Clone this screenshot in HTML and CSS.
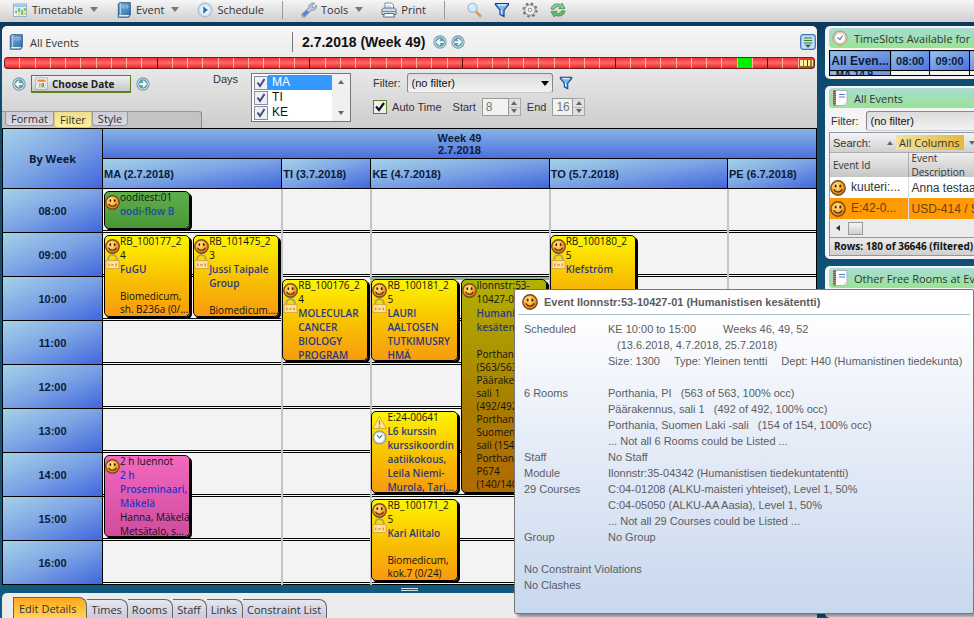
FILE: index.html
```html
<!DOCTYPE html>
<html lang="en">
<head>
    <meta charset="UTF-8">
    <meta name="viewport" content="width=device-width, initial-scale=1.0">
    <title>Timetable - Week 49</title>
    <link rel="stylesheet" href="styles.css">
</head>
<body>
    <!-- Icon sprite -->
    <svg class="sprite" aria-hidden="true">
        <defs>
            <radialGradient id="gold" cx="40%" cy="35%" r="65%">
                <stop offset="0" stop-color="#fff0a0"/><stop offset=".5" stop-color="#fcb53c"/><stop offset="1" stop-color="#d9741a"/>
            </radialGradient>
            <linearGradient id="blue" x1="0" y1="0" x2="1" y2="1">
                <stop offset="0" stop-color="#7fb2e0"/><stop offset="1" stop-color="#2f6aa5"/>
            </linearGradient>
            <radialGradient id="glass"><stop offset=".3" stop-color="#fff"/><stop offset="1" stop-color="#b8d4ea"/></radialGradient>
        </defs>
        <symbol id="i-timetable" viewBox="0 0 16 16">
            <rect x="1.5" y="2" width="13" height="12.5" fill="#f2f8fc" stroke="#8fb4cf"/>
            <path d="M2 2.5h12v2.5H2z" fill="#9cc8e6"/>
            <path d="M4.8 5v9M8 5v9M11.200 5v9M2 8h12M2 11h12" stroke="#bcd3e2" stroke-width=".8"/>
            <path d="M3 9h2v2H3zM6 6h2v4H6zM9 8h2v5H9zM12 6h2v3h-2z" fill="#7cc47a"/>
            <path d="M12 10h2v3h-2zM6 11.500h2v2H6z" fill="#f0d070"/>
        </symbol>
        <symbol id="i-book" viewBox="0 0 16 16">
            <path d="M3.500.7h10.800v12l-1.500 2.500H2.300V2z" fill="url(#blue)" stroke="#27527d" stroke-width=".9"/>
            <path d="M4.600 1.200v11.300" stroke="#b7d7f2"/>
            <path d="M3 13h10.300l-.9 1.600H3z" fill="#e6edf3"/>
            <path d="M6.500 3.500h5.500v2.500H6.500z" fill="#6ba0cf" stroke="#a9cdec" stroke-width=".6"/>
        </symbol>
        <symbol id="i-play" viewBox="0 0 16 16">
            <circle cx="8" cy="8" r="7" fill="url(#glass)" stroke="#9dbbd3"/>
            <path d="M6.200 4.300 11 8l-4.800 3.700z" fill="#2e73b8"/>
        </symbol>
        <symbol id="i-tools" viewBox="0 0 16 16">
            <path d="M13.500 1.300 10.800 3.800l.4 1.600 1.600.3 2.500-2.600c.6 2-.1 3.800-1.700 4.700-1 .5-2 .5-3 .2L5 13.700c-.8 1.500-2.800 1.800-3.800.8s-.6-2.900.9-3.600l5.800-5.200c-.5-2.700 2.300-5.400 5.600-4.400z" fill="#b9cbdc" stroke="#64809d" stroke-width=".8"/>
            <path d="M2.200 11.600 6 8.200l1.900 1.900-3.500 3.500c-1.200 1.600-3.900-.4-2.200-2z" fill="#4b84cf"/>
        </symbol>
        <symbol id="i-print" viewBox="0 0 16 16">
            <path d="M4 7V1h6.500L12.500 3v4" fill="#fff" stroke="#6288b4"/>
            <path d="M1 7.500 2.500 6h11L15 7.500v5H1z" fill="#cdd9e5" stroke="#5b6e85"/>
            <path d="M1.500 9.500h13" stroke="#7b8ea6"/>
            <path d="M3.500 11.500h9l1 3.500h-11z" fill="#fff" stroke="#5b6e85"/>
            <path d="M5.500 4h4.500M5.500 5.500H11" stroke="#7fb0e4" stroke-width=".8"/>
        </symbol>
        <symbol id="i-search" viewBox="0 0 16 16">
            <path d="m9.800 9.300 4.400 4.700" stroke="#d99a55" stroke-width="2.600" stroke-linecap="round"/>
            <circle cx="6.500" cy="5.800" r="4.500" fill="#d3e9fa" stroke="#9dbfdf" stroke-width="1.300"/>
            <path d="M4 5.500a2.600 2.600 0 0 1 2.500-2.300" stroke="#fff" fill="none"/>
        </symbol>
        <symbol id="i-funnel" viewBox="0 0 16 16">
            <path d="M1.500 1.500h13v1.300L10 8.200v6.300L6 12.500V8.200L1.500 2.800z" fill="#7db8ec" stroke="#153f8c" stroke-width="1.200"/>
            <path d="M4 3h8" stroke="#e3f3ff" stroke-width="1.300"/><path d="M7.500 8v4" stroke="#dcefff" stroke-width="1.200"/>
        </symbol>
        <symbol id="i-gear" viewBox="0 0 16 16">
            <circle cx="8" cy="8" r="6.500" fill="none" stroke="#737373" stroke-width="2" stroke-dasharray="2.500 2.600"/>
            <circle cx="8" cy="8" r="5.200" fill="#f2f2f2" stroke="#808080" stroke-width=".9"/>
            <circle cx="8" cy="8" r="1.800" fill="#fff" stroke="#808080" stroke-width=".9"/>
        </symbol>
        <symbol id="i-refresh" viewBox="0 0 16 16">
            <path d="M1 7c.5-4 5-6.500 9.500-4.300L12 1l3 5.500-6.200.3 1.500-1.700C7.500 4 5 4.800 4.300 7.300z" fill="#8bcb8d" stroke="#3f8f4b" stroke-width=".8"/>
            <path d="M15 9c-.5 4-5 6.500-9.500 4.300L4 15 1 9.500l6.200-.3-1.500 1.700c2.800 1.100 5.300.3 6-2.200z" fill="#69b574" stroke="#3f8f4b" stroke-width=".8"/>
        </symbol>
        <symbol id="i-left" viewBox="0 0 16 16">
            <circle cx="8" cy="8" r="7" fill="#d8e8f0" stroke="#7699ba" stroke-width="1.200"/><circle cx="8" cy="8" r="5.400" fill="#5b9fa8"/>
            <path d="M12 8H5.500M8 4.800 4.800 8 8 11.200" fill="none" stroke="#fff" stroke-width="2"/>
        </symbol>
        <symbol id="i-right" viewBox="0 0 16 16">
            <circle cx="8" cy="8" r="7" fill="#d8e8f0" stroke="#7699ba" stroke-width="1.200"/><circle cx="8" cy="8" r="5.400" fill="#5b9fa8"/>
            <path d="M4 8h6.500M8 4.800 11.200 8 8 11.200" fill="none" stroke="#fff" stroke-width="2"/>
        </symbol>
        <symbol id="i-calendar" viewBox="0 0 16 16">
            <rect x="1" y="1" width="14" height="14" fill="#fff" stroke="#7fa6c6"/>
            <path d="M3 3h10v3H3z" fill="#ef8a3c"/>
            <path d="M3.500 6v7h9V6" fill="none" stroke="#f0b080"/>
            <path d="M6 7.500v4.500M8.500 8h2v3.500h-2z" fill="none" stroke="#56883e" stroke-width="1.200"/>
        </symbol>
        <symbol id="i-smiley" viewBox="0 0 16 16">
            <circle cx="8" cy="8" r="7.200" fill="url(#gold)" stroke="#7a4a1c" stroke-width="1.400"/>
            <ellipse cx="5.700" cy="6" rx="1" ry="1.500" fill="#3c1c04"/><ellipse cx="10.300" cy="6" rx="1" ry="1.500" fill="#3c1c04"/>
            <path d="M3.800 9.300c1.500 3.600 6.900 3.600 8.400 0" fill="none" stroke="#5a2a08" stroke-width="1.200"/>
        </symbol>
        <symbol id="i-lock" viewBox="0 0 16 16">
            <path d="M3.500 8V5.500a4.500 4.500 0 0 1 9 0V8" fill="none" stroke="#a3a07c" stroke-width="2"/>
            <path d="M1 7h14v8.500H1z" fill="#fbe3a0" stroke="#dba436"/>
            <path d="M4 10v3M6.500 11.500h3M12 10v3" stroke="#d98e2e" stroke-width="1.400"/>
        </symbol>
        <symbol id="i-warning" viewBox="0 0 16 16">
            <path d="M8 1.500 15 14.500H1z" fill="#ffe793" stroke="#d9a52a" stroke-linejoin="round"/>
            <path d="M8 5.500v5M8 11.800v1.500" stroke="#9a8050" stroke-width="1.500"/>
        </symbol>
        <symbol id="i-clock" viewBox="0 0 16 16">
            <circle cx="8" cy="8" r="7" fill="#b5cbdd" stroke="#7c8fa3"/><circle cx="8" cy="8" r="5.200" fill="#fff"/>
            <path d="M5.500 5.500 8 8.500l3-3" fill="none" stroke="#4a6c94" stroke-width="1.200"/>
        </symbol>
        <symbol id="i-clock-gold" viewBox="0 0 16 16">
            <circle cx="8" cy="8" r="7" fill="#e5d3bc" stroke="#a8927c"/><circle cx="8" cy="8" r="5.200" fill="#fff" stroke="#c4b39e" stroke-width=".6"/>
            <path d="M5.500 7.500 8 9.500l2.500-4" fill="none" stroke="#5c7fa8" stroke-width="1.200"/>
        </symbol>
        <symbol id="i-notebook" viewBox="0 0 16 16">
            <path d="M3 .5h12v15H3z" fill="#fff" stroke="#a9b4bd"/>
            <path d="M2.500.5v15" stroke="#c53a33" stroke-width="3" stroke-dasharray="1.500 .5"/>
            <path d="M7 4.500h6M7 7h6" stroke="#4b7fd0" stroke-width="1.200"/><path d="M10.500 15.500H15V11z" fill="#cfd8e0"/>
        </symbol>
        <symbol id="i-expand" viewBox="0 0 16 16">
            <rect x=".7" y=".7" width="14.600" height="14.600" rx="2.500" fill="#c4dcf4" stroke="#3f74b4" stroke-width="1.200"/>
            <path d="M4 4h8M4 6.500h8M4 9h8" stroke="#37803c"/><path d="m5 10.800 3 3 3-3z" fill="#265f2c"/>
        </symbol>
    </svg>

    <header class="toolbar">
        <button class="tool"><svg><use href="#i-timetable"/></svg>Timetable<span class="caret"></span></button>
        <button class="tool"><svg><use href="#i-book"/></svg>Event<span class="caret"></span></button>
        <button class="tool"><svg><use href="#i-play"/></svg>Schedule</button>
        <span class="separator"></span>
        <button class="tool"><svg><use href="#i-tools"/></svg>Tools<span class="caret"></span></button>
        <button class="tool"><svg><use href="#i-print"/></svg>Print</button>
        <span class="separator"></span>
        <button class="tool tool-icon" aria-label="Search"><svg><use href="#i-search"/></svg></button>
        <button class="tool tool-icon" aria-label="Filter"><svg><use href="#i-funnel"/></svg></button>
        <button class="tool tool-icon" aria-label="Settings"><svg><use href="#i-gear"/></svg></button>
        <button class="tool tool-icon" aria-label="Refresh"><svg><use href="#i-refresh"/></svg></button>
    </header>

    <main class="workspace">
        <div class="main-column">
            <section class="timetable">
                <div class="timetable-head">
                    <div class="head-name"><svg><use href="#i-book"/></svg>All Events</div>
                    <h1>2.7.2018 (Week 49)</h1>
                    <button class="round" aria-label="Previous week"><svg><use href="#i-left"/></svg></button>
                    <button class="round" aria-label="Next week"><svg><use href="#i-right"/></svg></button>
                    <button class="expand" aria-label="Expand"><svg><use href="#i-expand"/></svg></button>
                </div>

                <!-- One cell for each week of the year -->
                <div class="weeks">
                    <i></i><i></i><i></i><i></i><i></i><i></i><i></i><i></i><i></i><i></i>
                    <i></i><i></i><i></i><i></i><i></i><i></i><i></i><i></i><i></i><i></i>
                    <i></i><i></i><i></i><i></i><i></i><i></i><i></i><i></i><i></i><i></i>
                    <i></i><i></i><i></i><i></i><i></i><i></i><i></i><i></i><i></i><i></i>
                    <i></i><i></i><i></i><i></i><i></i><i></i><i></i><i></i><i class="current"></i><i></i>
                    <i></i><i></i><i class="weeks-handle"></i>
                </div>

                <div class="controls">
                    <div class="date-side">
                        <div class="date-row">
                            <button class="round" aria-label="Previous date"><svg><use href="#i-left"/></svg></button>
                            <button class="choose-date"><svg><use href="#i-calendar"/></svg>Choose Date</button>
                            <button class="round" aria-label="Next date"><svg><use href="#i-right"/></svg></button>
                        </div>
                        <nav class="small-tabs">
                            <button>Format</button>
                            <button class="active">Filter</button>
                            <button>Style</button>
                        </nav>
                    </div>
                    <span class="days-label" id="days-label">Days</span>
                    <div class="days-list" role="group" aria-labelledby="days-label">
                        <div class="days-options">
                            <label class="selected"><input type="checkbox" checked><span>MA</span></label>
                            <label><input type="checkbox" checked><span>TI</span></label>
                            <label><input type="checkbox" checked><span>KE</span></label>
                        </div>
                        <div class="days-scroll">
                            <span class="arrow up"></span>
                            <span class="arrow down"></span>
                        </div>
                    </div>
                    <div class="filter-side">
                        <div class="filter-row">
                            <label for="filter">Filter:</label>
                            <select id="filter"><option>(no filter)</option></select>
                            <svg><use href="#i-funnel"/></svg>
                        </div>
                        <div class="time-row">
                            <label class="auto-time"><input type="checkbox" checked>Auto Time</label>
                            <label for="start">Start</label>
                            <span class="spinner">
                                <input id="start" type="text" value="8">
                                <span class="spin"><button aria-label="Later start"><span class="arrow up"></span></button><button aria-label="Earlier start"><span class="arrow down"></span></button></span>
                            </span>
                            <label for="end">End</label>
                            <span class="spinner">
                                <input id="end" type="text" value="16">
                                <span class="spin"><button aria-label="Later end"><span class="arrow up"></span></button><button aria-label="Earlier end"><span class="arrow down"></span></button></span>
                            </span>
                        </div>
                    </div>
                </div>

                <div class="calendar">
                    <div class="blue corner">By Week</div>
                    <div class="blue week">Week 49<br>2.7.2018</div>
                    <div class="blue day ma">MA (2.7.2018)</div>
                    <div class="blue day ti">TI (3.7.2018)</div>
                    <div class="blue day ke">KE (4.7.2018)</div>
                    <div class="blue day to">TO (5.7.2018)</div>
                    <div class="blue day pe">PE (6.7.2018)</div>

                    <div class="blue hour h8">08:00</div><div class="line h8"></div>
                    <div class="blue hour h9">09:00</div><div class="line h9"></div>
                    <div class="blue hour h10">10:00</div><div class="line h10"></div>
                    <div class="blue hour h11">11:00</div><div class="line h11"></div>
                    <div class="blue hour h12">12:00</div><div class="line h12"></div>
                    <div class="blue hour h13">13:00</div><div class="line h13"></div>
                    <div class="blue hour h14">14:00</div><div class="line h14"></div>
                    <div class="blue hour h15">15:00</div><div class="line h15"></div>
                    <div class="blue hour h16">16:00</div><div class="line h16"></div>

                    <div class="rule ti"></div>
                    <div class="rule ke"></div>
                    <div class="rule to"></div>
                    <div class="rule pe"></div>
                    <div class="slot-mark"></div>

                    <article class="event green slot-ma1 at-8">
                        <div class="marks"><svg><use href="#i-smiley"/></svg></div>
                        <div class="text">ooditest:01<b>oodi-flow B</b></div>
                    </article>
                    <article class="event yellow slot-ma1 at-9">
                        <div class="marks"><svg><use href="#i-smiley"/></svg><svg><use href="#i-lock"/></svg></div>
                        <div class="text">RB_100177_2<br>4<b>FuGU</b><p>Biomedicum,<br>sh. B236a (0/...</p></div>
                    </article>
                    <article class="event yellow slot-ma2 at-9">
                        <div class="marks"><svg><use href="#i-smiley"/></svg><svg><use href="#i-lock"/></svg></div>
                        <div class="text">RB_101475_2<br>3<b>Jussi Taipale<br>Group</b><p>Biomedicum....</p></div>
                    </article>
                    <article class="event pink slot-ma1 at-14">
                        <div class="marks"><svg><use href="#i-smiley"/></svg></div>
                        <div class="text">2 h luennot<b>2 h<br>Proseminaari,<br>Mäkelä</b>Hanna, Mäkelä<br>Metsätalo, s...</div>
                    </article>
                    <article class="event yellow slot-ti at-10">
                        <div class="marks"><svg><use href="#i-smiley"/></svg><svg><use href="#i-lock"/></svg></div>
                        <div class="text">RB_100176_2<br>4<b>MOLECULAR<br>CANCER<br>BIOLOGY<br>PROGRAM</b></div>
                    </article>
                    <article class="event yellow slot-ke1 at-10">
                        <div class="marks"><svg><use href="#i-smiley"/></svg><svg><use href="#i-lock"/></svg></div>
                        <div class="text">RB_100181_2<br>5<b>LAURI<br>AALTOSEN<br>TUTKIMUSRY<br>HMÄ</b></div>
                    </article>
                    <article class="event olive slot-ke2 at-10-long">
                        <div class="marks"><svg><use href="#i-smiley"/></svg></div>
                        <div class="text">Ilonnstr:53-<br>10427-01<b>Humanistis<br>kesätentti</b><p>Porthania<br>(563/563)<br>Päärakennu<br>sali 1<br>(492/492)<br>Porthania<br>Suomen L<br>sali (154/<br>Porthania<br>P674<br>(140/140)</p></div>
                    </article>
                    <article class="event yellow slot-ke1 at-13">
                        <div class="marks"><svg><use href="#i-warning"/></svg><svg><use href="#i-clock"/></svg></div>
                        <div class="text">E:24-00641<b>L6 kurssin<br>kurssikoordin<br>aatiikokous,<br>Leila Niemi-<br>Murola, Tarj...</b></div>
                    </article>
                    <article class="event yellow slot-ke1 at-15">
                        <div class="marks"><svg><use href="#i-smiley"/></svg><svg><use href="#i-lock"/></svg></div>
                        <div class="text">RB_100171_2<br>5<b>Kari Alitalo</b><p>Biomedicum,<br>kok.7 (0/24)</p></div>
                    </article>
                    <article class="event yellow slot-to1 at-9">
                        <div class="marks"><svg><use href="#i-smiley"/></svg><svg><use href="#i-lock"/></svg></div>
                        <div class="text">RB_100180_2<br>5<b>Klefström</b></div>
                    </article>
                </div>
            </section>

            <div class="splitter"><span></span></div>

            <section class="details">
                <nav class="tabs">
                    <button class="active">Edit Details</button>
                    <button>Times</button>
                    <button>Rooms</button>
                    <button>Staff</button>
                    <button>Links</button>
                    <button>Constraint List</button>
                </nav>
            </section>
        </div>

        <aside class="side-column">
            <section class="panel">
                <h2><svg><use href="#i-clock-gold"/></svg>TimeSlots Available for Event</h2>
                <div class="slots-wrap">
                    <table class="slots">
                        <tr><th class="first">All Even...</th><th>08:00</th><th>09:00</th><th>10:00</th></tr>
                        <tr><th class="first">MA 14.9....</th><td></td><td></td><td></td></tr>
                    </table>
                </div>
            </section>

            <section class="panel">
                <h2><svg><use href="#i-notebook"/></svg>All Events</h2>
                <div class="side-filter">
                    <label for="side-filter">Filter:</label>
                    <select id="side-filter"><option>(no filter)</option></select>
                </div>
                <div class="list">
                    <div class="search-row">
                        <span>Search:</span>
                        <span class="arrow up"></span>
                        <button class="all-columns">All Columns</button>
                        <span class="arrow down"></span>
                    </div>
                    <table class="events-table">
                        <thead>
                            <tr><th>Event Id</th><th><div class="two-line">Event<br>Description</div></th></tr>
                        </thead>
                        <tbody>
                            <tr><td><svg><use href="#i-smiley"/></svg>kuuteri:...</td><td>Anna testaa</td></tr>
                            <tr class="chosen"><td><svg><use href="#i-smiley"/></svg>E:42-0...</td><td>USD-414 / S</td></tr>
                        </tbody>
                    </table>
                    <div class="h-scroll"><span class="arrow left"></span><span class="thumb"></span></div>
                    <div class="rows-count">Rows: 180 of 36646 (filtered)</div>
                </div>
            </section>

            <section class="panel panel-rest">
                <h2><svg><use href="#i-notebook"/></svg>Other Free Rooms at Event</h2>
            </section>
        </aside>
    </main>

    <div class="tooltip" role="tooltip">
        <div class="tooltip-title"><svg><use href="#i-smiley"/></svg>Event Ilonnstr:53-10427-01 (Humanistisen kesätentti)</div>
        <dl>
            <dt>Scheduled</dt>
            <dd>
                <span class="wide">KE 10:00 to 15:00</span><span>Weeks 46, 49, 52</span><br>
                <span class="indent">(13.6.2018, 4.7.2018, 25.7.2018)</span><br>
                <span class="part">Size: 1300</span><span class="part">Type: Yleinen tentti</span><span>Dept: H40 (Humanistinen tiedekunta)</span>
            </dd>
            <dt class="spaced">6 Rooms</dt>
            <dd class="spaced">
                Porthania, PI &nbsp; (563 of 563, 100% occ)<br>
                Päärakennus, sali 1 &nbsp; (492 of 492, 100% occ)<br>
                Porthania, Suomen Laki -sali &nbsp; (154 of 154, 100% occ)<br>
                ... Not all 6 Rooms could be Listed ...
            </dd>
            <dt>Staff</dt>
            <dd>No Staff</dd>
            <dt>Module</dt>
            <dd>Ilonnstr:35-04342 (Humanistisen tiedekuntatentti)</dd>
            <dt>29 Courses</dt>
            <dd>
                C:04-01208 (ALKU-maisteri yhteiset), Level 1, 50%<br>
                C:04-05050 (ALKU-AA Aasia), Level 1, 50%<br>
                ... Not all 29 Courses could be Listed ...
            </dd>
            <dt>Group</dt>
            <dd>No Group</dd>
        </dl>
        <p>No Constraint Violations<br>No Clashes</p>
    </div>
</body>
</html>
```
FILE: styles.css
```css
* {
    margin: 0;
    padding: 0;
    box-sizing: border-box;
}

body {
    font-family: "Open Sans", "Noto Sans", sans-serif;
    font-size: 11px;
    color: #333;
    height: 100vh;
    display: flex;
    flex-direction: column;
    overflow: hidden;
    position: relative;
    background: linear-gradient(#0a2f52, #0f4b70 10%, #105a80);
}

button, input, select {
    font: inherit;
    color: inherit;
}

button {
    background: none;
    border: none;
    white-space: nowrap;
}

svg {
    width: 16px;
    height: 16px;
    flex: none;
    display: block;
}

.sprite {
    position: absolute;
    width: 0;
    height: 0;
}

/* Small triangles */
.caret, .arrow {
    width: 0;
    height: 0;
    border: 4px solid transparent;
    flex: none;
}

.caret {
    border-top: 5px solid #777;
    border-bottom: none;
    margin-left: 3px;
}

.arrow {
    display: block;
    border-width: 3px;
}

.arrow.up {
    border-top: none;
    border-bottom: 4px solid #666;
}

.arrow.down {
    border-bottom: none;
    border-top: 4px solid #666;
}

.arrow.left {
    border-left: none;
    border-right: 4px solid #333;
}

/* Toolbar */
.toolbar {
    flex: none;
    height: 22px;
    padding: 0 3px 3px;
    display: flex;
    align-items: center;
    background: linear-gradient(#f5f5f5, #cfcfcf);
}

.tool {
    display: flex;
    align-items: center;
    gap: 4px;
    padding: 0 9px;
}

.tool-icon {
    padding: 0 6px;
}

.separator {
    width: 1px;
    height: 18px;
    margin: 0 9px;
    background: #999;
}

.separator + .tool-icon {
    margin-left: 6px;
}

/* Workspace */
.workspace {
    flex: 1;
    min-height: 0;
    display: flex;
    gap: 8px;
    padding: 4px 0 0 2px;
}

.main-column {
    flex: 1;
    min-width: 0;
    display: flex;
    flex-direction: column;
}

.timetable {
    border-radius: 5px 5px 0 0;
    border-top: 1px solid #fff;
    background: linear-gradient(#f6f6f6, #e4e4e4 50px, #cdcdcd 102px);
}

.timetable-head {
    height: 30px;
    padding: 0 1px 0 6px;
    display: flex;
    align-items: center;
    gap: 4px;
}

.head-name {
    flex: 0 0 285px;
    height: 20px;
    display: flex;
    align-items: center;
    gap: 6px;
    border-right: 1px solid #777;
}

h1 {
    font: bold 14px "Liberation Sans", Arial, sans-serif;
    color: #111;
    margin: 0 3px 0 5px;
}

.round svg {
    width: 14px;
    height: 14px;
}

.expand {
    margin-left: auto;
}

.weeks {
    height: 12px;
    margin: 0 2px;
    display: grid;
    grid-template-columns: repeat(53, 1fr);
    border: 1px solid #702020;
    border-radius: 3px;
    background: linear-gradient(#f03030, #ff6a6a 50%, #f02020);
}

.weeks i {
    border-right: 1px solid #ffb0b0;
}

.weeks i:nth-child(10n) {
    border-color: #501010;
}

.weeks .current {
    background: #00f000;
}

.weeks .weeks-handle {
    margin: 1px 0;
    border: 1px solid #8a6a20;
    background: linear-gradient(90deg, #fff0a0 20%, #a08020 20% 30%, #fff0a0 30% 50%, #802010 50% 65%, #fff0a0 65% 80%, #a08020 80% 90%, #fff0a0 90%);
}

/* Controls */
.controls {
    height: 59px;
    display: flex;
}

.date-side {
    flex: 0 0 200px;
    display: flex;
    flex-direction: column;
    justify-content: space-between;
}

.date-row {
    display: flex;
    align-items: center;
    gap: 5px;
    padding: 6px 0 0 10px;
}

.choose-date {
    width: 100px;
    height: 18px;
    display: flex;
    align-items: center;
    gap: 4px;
    padding: 0 3px;
    border: 1px solid #5f7f1f;
    border-bottom-width: 2px;
    background: linear-gradient(#f0f0f0, #c8c8c8);
    font-size: 10px;
    font-weight: 700;
    color: #222;
}

.choose-date svg {
    width: 13px;
    height: 13px;
}

.small-tabs {
    display: flex;
    height: 17px;
    padding-left: 3px;
    border-top: 1px solid #999;
    border-right: 1px solid #888;
    border-top-right-radius: 3px;
    background: #c3c3c3;
}

.small-tabs button {
    height: 14px;
    line-height: 13px;
    padding: 0 5px;
    border: 1px solid #999;
    border-top: none;
    border-radius: 0 0 4px 4px;
    background: linear-gradient(#cdcdda, #dadae8);
}

.small-tabs .active {
    height: 16px;
    line-height: 15px;
    border-color: #d8c870;
    background: linear-gradient(#f0df8a, #fff0a0);
}

.days-label {
    font: 11px "Liberation Sans", Arial, sans-serif;
    margin: 4px 13px 0 11px;
}

.days-list {
    width: 100px;
    height: 49px;
    margin-top: 4px;
    display: flex;
    border: 1px solid #777;
    background: #fff;
    font: 12px/15px "Liberation Sans", Arial, sans-serif;
    color: #111;
}

.days-options {
    flex: 1;
    padding: 1px 0 0 2px;
}

.days-options label {
    display: flex;
    align-items: center;
    height: 15px;
}

.days-options span {
    flex: 1;
    padding-left: 4px;
}

.days-options .selected span {
    background: #3399ff;
    color: #fff;
}

input[type="checkbox"] {
    appearance: none;
    width: 14px;
    height: 14px;
    border: 1px solid #8a8a9a;
    background: #eef0f4 url("data:image/svg+xml,%3Csvg xmlns='http://www.w3.org/2000/svg' viewBox='0 0 12 12'%3E%3Cpath d='M2.500 5.500 5 9 9.500 2' fill='none' stroke='%23404c86' stroke-width='2'/%3E%3C/svg%3E") center/100%;
}

.days-scroll {
    width: 18px;
    padding: 6px 0;
    display: flex;
    flex-direction: column;
    align-items: center;
    justify-content: space-between;
    background: #f0f0f0;
}

.filter-side {
    font-family: "Liberation Sans", Arial, sans-serif;
    margin: 4px 0 0 22px;
    flex: none;
}

.filter-row, .time-row {
    display: flex;
    align-items: center;
    gap: 6px;
}

.time-row {
    margin-top: 5px;
}

select {
    appearance: none;
    height: 20px;
    padding: 0 4px;
    font-size: 11px;
    color: #111;
    border: 1px solid #888;
    border-bottom-color: #ccc;
    border-radius: 3px;
    background: url("data:image/svg+xml,%3Csvg xmlns='http://www.w3.org/2000/svg' viewBox='0 0 8 5'%3E%3Cpath d='M0 0h8L4 5z'/%3E%3C/svg%3E") right 3px center/8px 5px no-repeat, linear-gradient(#dcdcdc, #f2f2f2);
}

.filter-row select {
    width: 146px;
}

.filter-row svg {
    width: 14px;
    height: 14px;
}

.auto-time {
    display: flex;
    align-items: center;
    gap: 5px;
    margin-right: 5px;
}

.auto-time input[type="checkbox"] {
    border-color: #5f7f1f;
    background-image: url("data:image/svg+xml,%3Csvg xmlns='http://www.w3.org/2000/svg' viewBox='0 0 12 12'%3E%3Cpath d='M2 5.500 5 9 10 2' fill='none' stroke='%23111' stroke-width='2.200'/%3E%3C/svg%3E");
}

.spinner {
    display: flex;
    height: 18px;
}

.spinner input {
    width: 27px;
    padding-left: 3px;
    border: 1px solid #999;
    background: #f2f2f0;
    color: #777;
    font-size: 12px;
}

.spinner #end {
    width: 21px;
}

.spin {
    display: flex;
    flex-direction: column;
    border: 1px solid #aaa;
    border-left: none;
}

.spin button {
    flex: 1;
    width: 11px;
    display: flex;
    align-items: center;
    justify-content: center;
    background: #e0e0e0;
}

.spin button + button {
    border-top: 1px solid #bbb;
}

/* Calendar: one column for the hours, eight event lanes */
.calendar {
    display: grid;
    grid-template-columns: 100px repeat(8, 1fr);
    grid-template-rows: 30px 30px repeat(9, 44px);
    border: 1px solid #000;
    border-bottom: none;
    background: #f3f3f3;
    font-family: "Liberation Sans", Arial, sans-serif;
    font-weight: bold;
    color: #0c1c38;
}

.blue {
    background: linear-gradient(to bottom right, #a5d2e8, #7ba3e4 50%, #4166dd);
    border-bottom: 1px solid #000;
    display: flex;
    align-items: center;
}

.corner {
    grid-area: 1 / 1 / 3 / 2;
    border-right: 1px solid #000;
    justify-content: center;
    font-family: "Open Sans", "Noto Sans", sans-serif;
}

.week {
    grid-area: 1 / 2 / 2 / 10;
    justify-content: center;
    text-align: center;
    line-height: 12px;
    background: linear-gradient(#86b4e6, #4c70dd);
}

.day {
    grid-row: 2;
    padding-left: 1px;
}

.day.ti, .day.ke, .day.to, .day.pe {
    border-left: 1px solid #000;
}

.ma { grid-column: 2 / 4; }
.ti { grid-column: 4 / 5; }
.ke { grid-column: 5 / 7; }
.to { grid-column: 7 / 9; }
.pe { grid-column: 9 / 10; }

.hour {
    grid-column: 1;
    justify-content: center;
    border-right: 1px solid #000;
}

.line {
    grid-column: 2 / 10;
    border-bottom: 3px double #000;
}

.rule {
    grid-row: 3 / 12;
    width: 2px;
    background: #c4c4c4;
}

.h8 { grid-row: 3; }
.h9 { grid-row: 4; }
.h10 { grid-row: 5; }
.h11 { grid-row: 6; }
.h12 { grid-row: 7; }
.h13 { grid-row: 8; }
.h14 { grid-row: 9; }
.h15 { grid-row: 10; }
.h16 { grid-row: 11; }

.slot-mark {
    grid-area: 5 / 5 / 8 / 7;
    height: 3px;
    background: #8fb596;
}

.event {
    display: flex;
    margin: 2px 2px 4px 1px;
    min-width: 0;
    border: 1px solid #000;
    border-radius: 5px;
    box-shadow: 2px 2px 0 #000;
    font: 10px/14px "Open Sans", "Noto Sans", sans-serif;
    color: #111;
    white-space: nowrap;
}

.marks {
    flex: none;
    width: 15px;
    padding-top: 3px;
}

.marks svg {
    width: 15px;
    height: 15px;
}

.text {
    margin-top: -2px;
}

.text b {
    display: block;
    font-weight: 600;
    color: #2b3a80;
}

.text p {
    margin-top: 14px;
    line-height: 13px;
}

.green { background: linear-gradient(#5fae4c, #4a9636); }
.yellow { background: linear-gradient(#fdf400, #f9c400 50%, #f79a10); }
.pink { background: linear-gradient(#f268c0, #d04c9c); }
.olive { background: linear-gradient(#b4b000, #a87c00 60%, #b06a00); }

.green b { color: #1a49a8; }
.pink b { color: #2a34cc; }

.slot-ma1 { grid-column: 2; }
.slot-ma2 { grid-column: 3; }
.slot-ti { grid-column: 4; }
.slot-ke1 { grid-column: 5; }
.slot-ke2 { grid-column: 6; }
.slot-to1 { grid-column: 7; }

.at-8 { grid-row: 3 / 4; }
.at-9 { grid-row: 4 / 6; }
.at-10 { grid-row: 5 / 7; }
.at-10-long { grid-row: 5 / 10; }
.at-13 { grid-row: 8 / 10; }
.at-14 { grid-row: 9 / 11; }
.at-15 { grid-row: 10 / 12; }

/* Bottom details */
.splitter {
    flex: none;
    height: 8px;
    display: flex;
    align-items: center;
    justify-content: center;
}

.splitter span {
    width: 17px;
    height: 3px;
    border: 1px solid #cfe0ea;
    border-width: 1px 0;
}

.details {
    flex: 1;
    padding: 4px 0 0 11px;
    border-radius: 5px 5px 0 0;
    background: #ececec;
}

.tabs {
    display: flex;
    align-items: flex-end;
}

.tabs button {
    height: 20px;
    padding: 0 5px 0 4px;
    border: 1px solid #666;
    border-left-width: 0;
    border-bottom: none;
    border-top-right-radius: 8px;
    background: linear-gradient(#e6e6ee, #c9c9dc);
}

.tabs .active {
    height: 22px;
    padding: 0 10px 0 5px;
    border-left-width: 1px;
    background: linear-gradient(#ffa81c, #ffd65c);
}

/* Right column */
.side-column {
    flex: 0 0 149px;
    display: flex;
    flex-direction: column;
    gap: 7px;
    white-space: nowrap;
    overflow: hidden;
}

.panel {
    padding: 2px 0 3px 4px;
    border-radius: 5px 0 0 5px;
    background: #f4f4f4;
    overflow: hidden;
    flex: none;
}

.panel-rest {
    flex: 1;
}

.panel h2 {
    height: 20px;
    display: flex;
    align-items: center;
    gap: 6px;
    padding-left: 3px;
    font-size: 11px;
    font-weight: 400;
    border-radius: 4px 0 0 4px;
    background: linear-gradient(#a9dcd6, #98e494);
}

.slots-wrap {
    height: 26px;
    margin-top: 2px;
    border-bottom: 1px solid #000;
    overflow: hidden;
}

.slots {
    width: 180px;
    table-layout: fixed;
    border-collapse: collapse;
    font: bold 11px "Liberation Sans", Arial, sans-serif;
    color: #0c1c38;
}

.slots th, .slots td {
    height: 20px;
    border: 1px solid #000;
    background: #f3f3f3;
}

.slots th {
    background: linear-gradient(to bottom right, #96c2e8, #4a6fdd);
}

.slots .first {
    width: 61px;
    font-size: 12px;
}

.slots tr + tr .first {
    font-size: 10px;
    line-height: 8px;
    vertical-align: top;
}

.side-filter {
    display: flex;
    align-items: center;
    gap: 7px;
    margin: 3px 0 1px;
    padding-left: 2px;
    font-family: "Liberation Sans", Arial, sans-serif;
}

.side-filter select {
    flex: none;
    width: 140px;
}

.list {
    border: 1px solid #8a98a8;
    border-right: none;
}

.search-row {
    height: 20px;
    display: flex;
    align-items: center;
    gap: 5px;
    padding-left: 3px;
    border-bottom: 1px solid #aaa;
    background: linear-gradient(#f4f4f4, #d0d0d0);
    font-family: "Liberation Sans", Arial, sans-serif;
}

.search-row .arrow.up {
    margin-left: 11px;
}

.all-columns {
    font-family: "Open Sans", "Noto Sans", sans-serif;
    line-height: 15px;
    padding: 0 4px 0 3px;
    margin-left: -2px;
    background: linear-gradient(90deg, #f2e2a0, #e5b93c);
}

.events-table {
    width: 190px;
    table-layout: fixed;
    border-collapse: collapse;
}

.events-table th {
    height: 24px;
    padding-left: 3px;
    text-align: left;
    font-size: 10px;
    font-weight: 400;
    background: linear-gradient(#ededed, #c6c6c6);
    border-right: 1px solid #aaa;
}

.events-table th:first-child {
    width: 78px;
}

.two-line {
    height: 24px;
    overflow: hidden;
    line-height: 14px;
    display: flex;
    align-items: center;
}

.events-table td {
    height: 21px;
    padding-left: 3px;
    font: 12px "Liberation Sans", Arial, sans-serif;
    background: #fff;
    border-right: 1px solid #ddd;
}

.events-table td:first-child {
    padding-left: 0;
}

.events-table td svg {
    display: inline-block;
    vertical-align: middle;
    margin-right: 5px;
}

.events-table .chosen td {
    background: #ff9a05;
    color: #6a4210;
}

.h-scroll {
    height: 18px;
    display: flex;
    align-items: center;
    gap: 8px;
    padding-left: 6px;
    background: #ebebeb;
}

.thumb {
    width: 15px;
    height: 13px;
    border: 1px solid #999;
    background: linear-gradient(#f5f5f5, #cfcfcf);
}

.rows-count {
    height: 18px;
    line-height: 16px;
    padding-left: 4px;
    border-top: 1px solid #8a98a8;
    background: linear-gradient(#ececec, #cfcfcf);
    font-size: 10px;
    font-weight: 700;
    color: #111;
}

/* Event tooltip, lies over the calendar */
.tooltip {
    position: absolute;
    top: 289px;
    right: 0;
    width: 460px;
    padding-bottom: 20px;
    border: 1px solid #767676;
    border-radius: 2px;
    background: linear-gradient(#fff 20px, #e4ebf7 50%, #c8d8ee);
    box-shadow: 3px 3px 3px rgba(0, 0, 0, 0.4);
    font: 11px/16px "Liberation Sans", Arial, sans-serif;
    color: #5c5c60;
    white-space: nowrap;
}

.tooltip-title {
    height: 25px;
    display: flex;
    align-items: center;
    gap: 6px;
    margin: 0 3px 6px;
    padding-left: 4px;
    border-bottom: 1px solid #a9bfcc;
    font-weight: bold;
}

.tooltip dl {
    display: grid;
    grid-template-columns: 84px 1fr;
    padding-left: 9px;
}

.tooltip .spaced {
    margin-top: 16px;
}

.tooltip p {
    padding: 16px 0 0 9px;
}

.wide {
    margin-right: 27px;
}

.indent {
    margin-left: 9px;
}

.part {
    margin-right: 14px;
}
```
